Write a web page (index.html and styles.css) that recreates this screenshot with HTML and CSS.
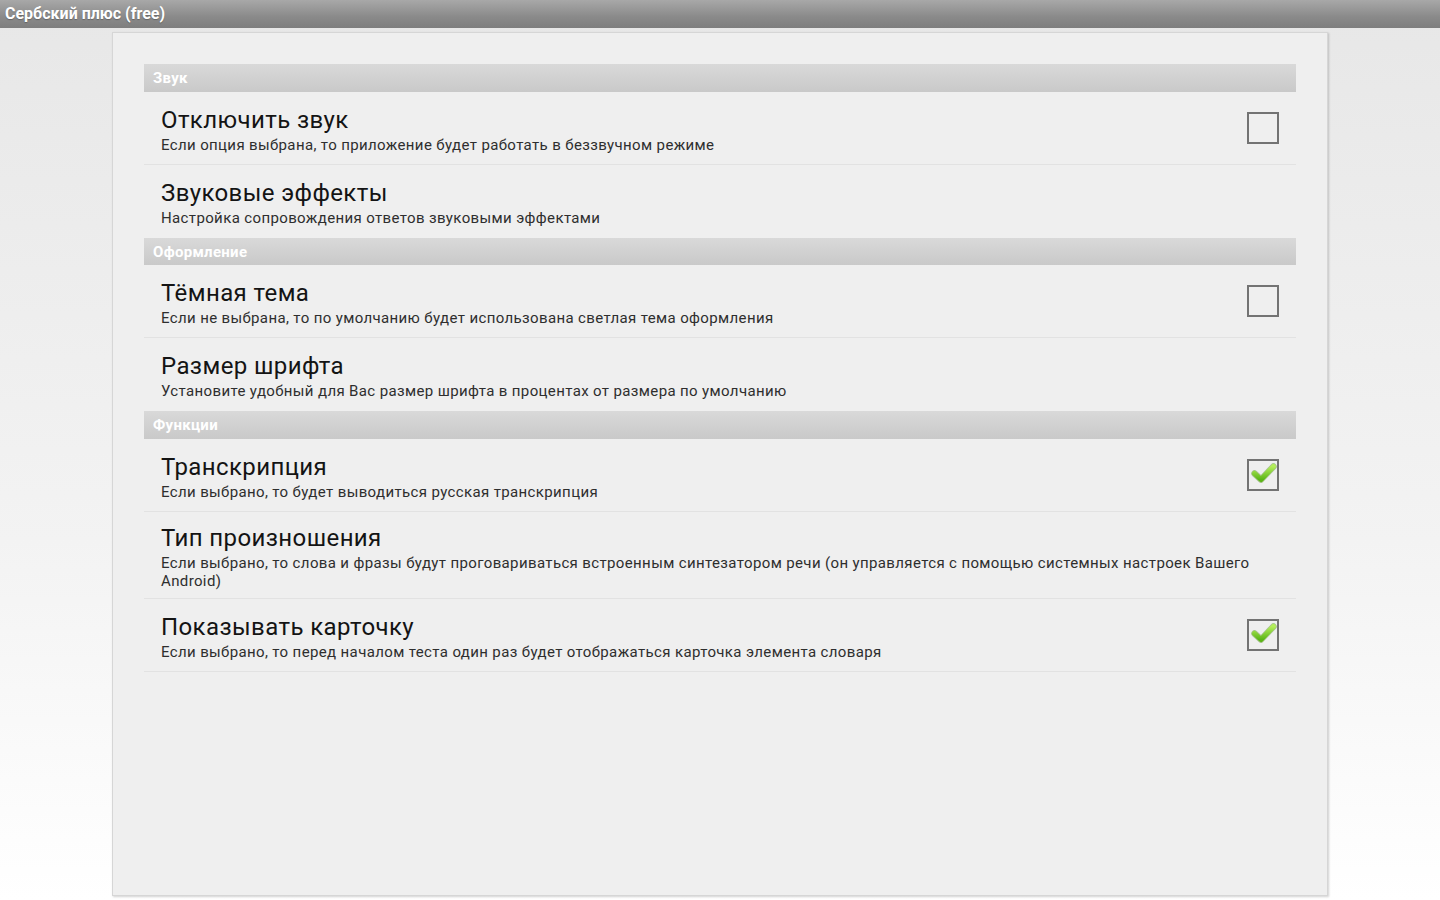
FILE: index.html
```html
<!DOCTYPE html>
<html lang="ru">
<head>
<meta charset="utf-8">
<title>Сербский плюс (free)</title>
<link rel="stylesheet" href="styles.css">
</head>
<body>
<div class="titlebar">Сербский плюс (free)</div>
<main class="stage">
  <div class="card">
    <div class="section">Звук</div>
    <div class="row divided">
      <div class="text">
        <div class="title">Отключить звук</div>
        <div class="summary">Если опция выбрана, то приложение будет работать в беззвучном режиме</div>
      </div>
      <span class="check"></span>
    </div>
    <div class="row">
      <div class="text">
        <div class="title">Звуковые эффекты</div>
        <div class="summary">Настройка сопровождения ответов звуковыми эффектами</div>
      </div>
    </div>
    <div class="section">Оформление</div>
    <div class="row divided">
      <div class="text">
        <div class="title">Тёмная тема</div>
        <div class="summary">Если не выбрана, то по умолчанию будет использована светлая тема оформления</div>
      </div>
      <span class="check"></span>
    </div>
    <div class="row">
      <div class="text">
        <div class="title">Размер шрифта</div>
        <div class="summary">Установите удобный для Вас размер шрифта в процентах от размера по умолчанию</div>
      </div>
    </div>
    <div class="section">Функции</div>
    <div class="row divided">
      <div class="text">
        <div class="title">Транскрипция</div>
        <div class="summary">Если выбрано, то будет выводиться русская транскрипция</div>
      </div>
      <span class="check on"><svg viewBox="0 0 28 28" width="28" height="28"><defs><linearGradient id="g1" x1="0" y1="0" x2="0" y2="1"><stop offset="0" stop-color="#b4ee5a"/><stop offset="1" stop-color="#5cb517"/></linearGradient></defs><polyline points="5.5,12.5 12,18.5 24.5,5.5" fill="none" stroke="#6a9e3a" stroke-opacity="0.55" stroke-width="6.5" stroke-linecap="round" stroke-linejoin="round"/><polyline points="5.5,12.5 12,18.5 24.5,5.5" fill="none" stroke="url(#g1)" stroke-width="5" stroke-linecap="round" stroke-linejoin="round"/></svg></span>
    </div>
    <div class="row divided">
      <div class="text">
        <div class="title">Тип произношения</div>
        <div class="summary">Если выбрано, то слова и фразы будут проговариваться встроенным синтезатором речи (он управляется с помощью системных настроек Вашего Android)</div>
      </div>
    </div>
    <div class="row divided">
      <div class="text">
        <div class="title">Показывать карточку</div>
        <div class="summary">Если выбрано, то перед началом теста один раз будет отображаться карточка элемента словаря</div>
      </div>
      <span class="check on"><svg viewBox="0 0 28 28" width="28" height="28"><defs><linearGradient id="g2" x1="0" y1="0" x2="0" y2="1"><stop offset="0" stop-color="#b4ee5a"/><stop offset="1" stop-color="#5cb517"/></linearGradient></defs><polyline points="5.5,12.5 12,18.5 24.5,5.5" fill="none" stroke="#6a9e3a" stroke-opacity="0.55" stroke-width="6.5" stroke-linecap="round" stroke-linejoin="round"/><polyline points="5.5,12.5 12,18.5 24.5,5.5" fill="none" stroke="url(#g2)" stroke-width="5" stroke-linecap="round" stroke-linejoin="round"/></svg></span>
    </div>
  </div>
</main>
</body>
</html>
```

FILE: styles.css
```css
html, body {
  margin: 0;
  padding: 0;
  height: 100%;
}
body {
  font-family: Roboto, "Noto Sans", sans-serif;
  background: linear-gradient(to bottom, #e7e7e7 0%, #f3f3f3 60%, #ffffff 100%);
  overflow: hidden;
}
.titlebar {
  height: 28px;
  line-height: 28px;
  padding-left: 5px;
  color: #ffffff;
  font-weight: bold;
  font-size: 16px;
  background: linear-gradient(to bottom, #a8a8a8 0%, #8a8a8a 60%, #7e7e7e 100%);
  text-shadow: 0 1px 1px rgba(0,0,0,0.25);
}
.stage {
  display: flex;
  justify-content: center;
  padding-top: 4px;
}
.card {
  box-sizing: border-box;
  width: 1216px;
  height: 864px;
  background: #efefef;
  border: 1px solid #d6d6d6;
  box-shadow: 1px 1px 2px rgba(0,0,0,0.18);
  padding: 31px 31px;
}
.section {
  height: 27.5px;
  line-height: 28px;
  padding-left: 9px;
  color: #ffffff;
  font-weight: bold;
  font-size: 15px;
  letter-spacing: 0.3px;
  background: linear-gradient(to bottom, #d9d9d9 0%, #c9c9c9 100%);
}
.row {
  display: flex;
  align-items: center;
  padding: 0 17px;
  min-height: 73px;
  box-sizing: border-box;
  border-bottom: 1px solid transparent;
}
.row.divided {
  border-bottom-color: #e2e2e2;
}
.text {
  flex: 1;
  padding: 12px 0 8px;
}
.title {
  font-size: 24px;
  line-height: 28px;
  letter-spacing: 0.4px;
  color: #141414;
  margin-bottom: 2px;
}
.summary {
  font-size: 15px;
  line-height: 18px;
  letter-spacing: 0.37px;
  color: #2e2e2e;
}
.check {
  box-sizing: border-box;
  width: 32px;
  height: 32px;
  flex: none;
  border: 2px solid #737373;
  margin-left: 16px;
  display: flex;
  align-items: center;
  justify-content: center;
}
.check svg {
  display: block;
}
```
